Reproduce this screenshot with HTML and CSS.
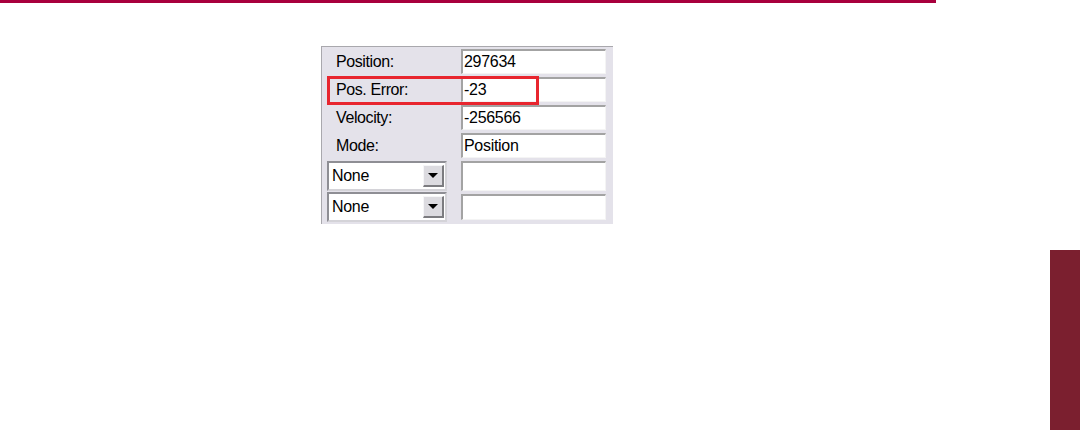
FILE: index.html
```html
<!DOCTYPE html>
<html>
<head>
<meta charset="utf-8">
<link rel="stylesheet" href="styles.css">
</head>
<body>
<div class="topbar"></div>
<div class="main">
  <div class="panel">
    <div class="label">Position:</div>
    <div class="field">297634</div>
    <div class="label">Pos. Error:</div>
    <div class="field">-23</div>
    <div class="label">Velocity:</div>
    <div class="field">-256566</div>
    <div class="label">Mode:</div>
    <div class="field">Position</div>
    <div class="combo"><span class="combo-text">None</span><span class="combo-btn"><span class="arrow"></span></span></div>
    <div class="field"></div>
    <div class="combo"><span class="combo-text">None</span><span class="combo-btn"><span class="arrow"></span></span></div>
    <div class="field"></div>
    <div class="highlight"></div>
  </div>
  <div class="sidebar"></div>
</div>
</body>
</html>
```

FILE: styles.css
```css
html, body {
  margin: 0;
  padding: 0;
  background: #ffffff;
}
body {
  width: 1080px;
  height: 430px;
  overflow: hidden;
  font-family: "Liberation Sans", Arial, sans-serif;
}
.topbar {
  width: 936px;
  height: 3px;
  background: #a8003d;
}
.main {
  display: flex;
  height: 427px;
  padding-left: 321px;
  box-sizing: border-box;
}
.panel {
  position: relative;
  margin-top: 43px;
  width: 292px;
  height: 178px;
  box-sizing: border-box;
  background: #e4e2ea;
  border-top: 1px solid #a9a8ad;
  border-left: 1px solid #a9a8ad;
  display: grid;
  grid-template-columns: 128px 145px;
  grid-template-rows: 25px 25px 25px 25px 30px 26px;
  column-gap: 6px;
  row-gap: 3px;
  padding: 2px 7px 0 5px;
  align-self: flex-start;
}
.label {
  font-size: 16px;
  color: #000;
  padding-left: 9px;
  display: flex;
  align-items: center;
  letter-spacing: -0.4px;
}
.field {
  background: #ffffff;
  border-top: 2px solid #a3a3a3;
  border-left: 2px solid #a3a3a3;
  border-right: 1px solid #f4f4f4;
  border-bottom: 1px solid #f4f4f4;
  box-sizing: border-box;
  font-size: 16px;
  color: #000;
  padding-left: 1px;
  display: flex;
  align-items: center;
  letter-spacing: -0.3px;
}
.combo {
  width: 120px;
  height: 30px;
  box-sizing: border-box;
  background: #ffffff;
  border-top: 2px solid #8e8e94;
  border-left: 2px solid #8e8e94;
  border-right: 2px solid #d4d3d8;
  border-bottom: 2px solid #d4d3d8;
  display: flex;
  align-items: center;
  padding: 1px;
  align-self: center;
}
.combo-text {
  flex: 1;
  font-size: 16px;
  color: #000;
  padding-left: 2px;
  letter-spacing: -0.3px;
}
.combo-btn {
  width: 21px;
  height: 22px;
  box-sizing: border-box;
  background: #dcdbe0;
  border-top: 1px solid #f6f6f8;
  border-left: 1px solid #f6f6f8;
  border-right: 2px solid #7c7c80;
  border-bottom: 2px solid #7c7c80;
  display: flex;
  align-items: center;
  justify-content: center;
}
.arrow {
  width: 0;
  height: 0;
  border-left: 5px solid transparent;
  border-right: 5px solid transparent;
  border-top: 5px solid #000;
}
.highlight {
  position: absolute;
  left: 5px;
  top: 29px;
  width: 212px;
  height: 29px;
  box-sizing: border-box;
  border: 3px solid #e8262f;
  pointer-events: none;
}
.sidebar {
  margin-left: auto;
  align-self: flex-end;
  width: 30px;
  height: 180px;
  background: #7b1f2f;
}
```
